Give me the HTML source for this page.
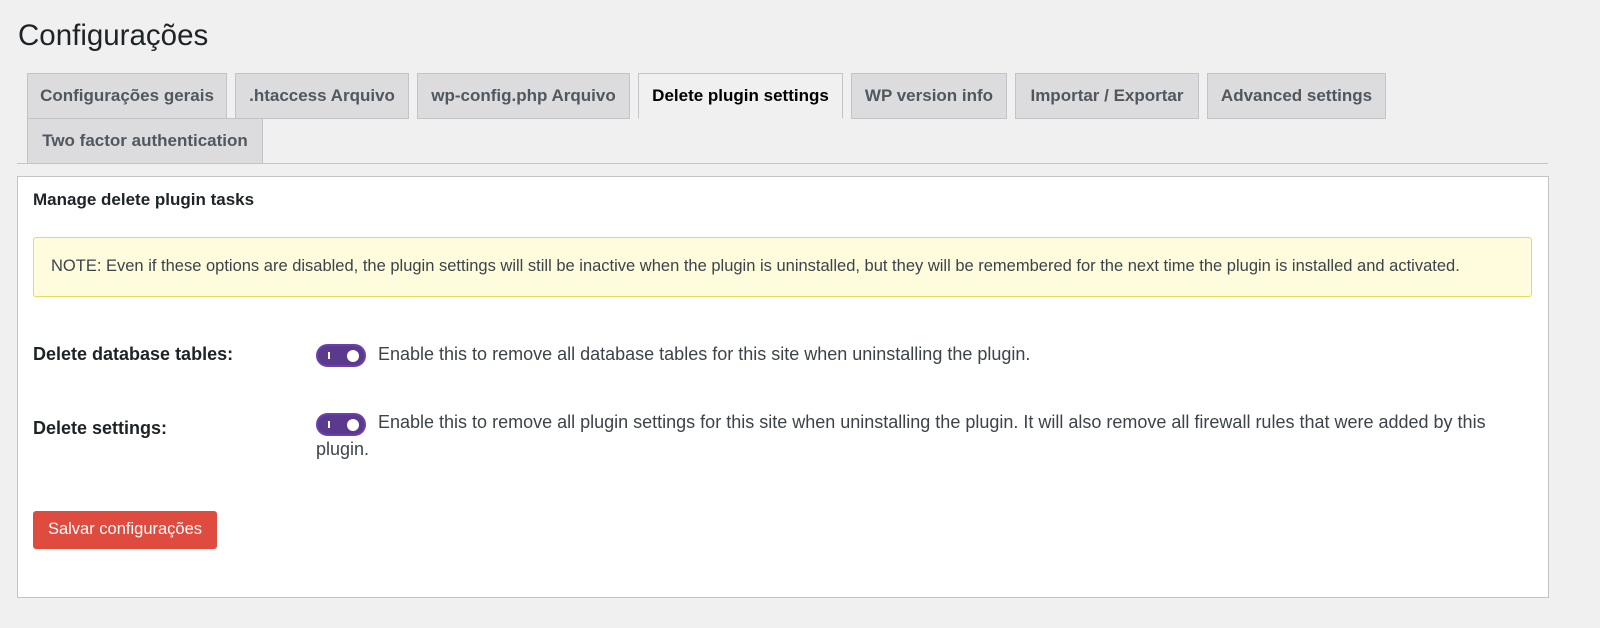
<!DOCTYPE html>
<html><head><meta charset="utf-8"><style>
*{box-sizing:border-box;margin:0;padding:0}
body{width:1600px;height:628px;background:#f0f0f1;font-family:"Liberation Sans",sans-serif;color:#1d2327;position:relative;overflow:hidden}
h1{position:absolute;left:18px;top:19px;font-size:29.5px;font-weight:400;color:#1d2327}
.tab{position:absolute;height:46px;background:#dcdcde;border:1px solid #c3c4c7;font-weight:bold;font-size:17px;color:#50575e;line-height:44px;text-align:center;white-space:nowrap}
.tab.act{background:#f0f0f1;color:#000;border-bottom-color:#f0f0f1}
.line{position:absolute;left:17px;top:163px;width:1531px;height:1px;background:#c3c4c7}
.panel{position:absolute;left:17px;top:176px;width:1532px;height:422px;background:#fff;border:1px solid #c3c4c7}
.abs{position:absolute}
.note{position:absolute;left:15px;top:60px;width:1499px;height:60px;background:#fefcdc;border:1px solid #e5dc5a;border-radius:3px;font-size:16.5px;color:#3c434a;padding:19px 0 0 17px;white-space:nowrap}
.lbl{position:absolute;left:15px;font-weight:bold;font-size:18px;color:#1d2327}
.tg{position:absolute;left:298px;width:50px;height:23px;border-radius:12px;background:#5b3a8e;border:2px solid #6b3fb0}
.tg:before{content:"";position:absolute;left:10px;top:6px;width:2px;height:7px;background:#fff}
.tg:after{content:"";position:absolute;right:5px;top:3.5px;width:12px;height:12px;border-radius:50%;background:#fff}
.desc{position:absolute;left:298px;width:1190px;font-size:18px;color:#3c434a;line-height:27px}
.btn{position:absolute;left:15px;top:334px;width:184px;height:38px;background:#e04b3f;border-radius:3px;color:#fff;font-size:16.5px;line-height:37px;text-align:center}
</style></head><body>
<h1>Configurações</h1>
<div class="tab" style="left:27px;top:73px;width:200px">Configurações gerais</div>
<div class="tab" style="left:235px;top:73px;width:174px">.htaccess Arquivo</div>
<div class="tab" style="left:417px;top:73px;width:213px">wp-config.php Arquivo</div>
<div class="tab act" style="left:638px;top:73px;width:205px">Delete plugin settings</div>
<div class="tab" style="left:851px;top:73px;width:156px">WP version info</div>
<div class="tab" style="left:1015px;top:73px;width:184px">Importar / Exportar</div>
<div class="tab" style="left:1207px;top:73px;width:179px">Advanced settings</div>
<div class="tab" style="left:27px;top:118px;width:236px">Two factor authentication</div>
<div class="line"></div>
<div class="panel">
<div class="abs" style="left:15px;top:13px;font-weight:bold;font-size:17px">Manage delete plugin tasks</div>
<div class="note">NOTE: Even if these options are disabled, the plugin settings will still be inactive when the plugin is uninstalled, but they will be remembered for the next time the plugin is installed and activated.</div>
<div class="lbl" style="top:167px">Delete database tables:</div>
<div class="tg" style="top:167px"></div>
<div class="desc" style="top:164px;text-indent:62px">Enable this to remove all database tables for this site when uninstalling the plugin.</div>
<div class="lbl" style="top:241px">Delete settings:</div>
<div class="tg" style="top:236px"></div>
<div class="desc" style="top:232px;text-indent:62px">Enable this to remove all plugin settings for this site when uninstalling the plugin. It will also remove all firewall rules that were added by this plugin.</div>
<div class="btn">Salvar configurações</div>
</div>
</body></html>
